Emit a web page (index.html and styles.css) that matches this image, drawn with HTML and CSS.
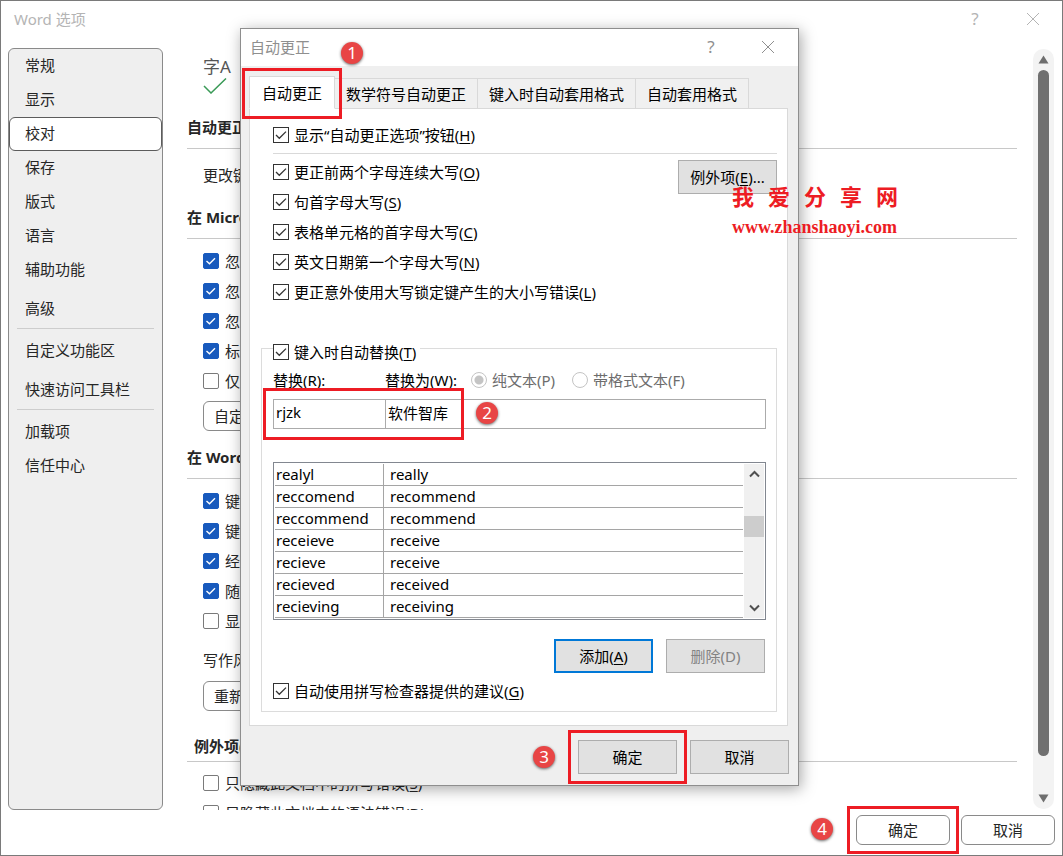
FILE: index.html
```
<!DOCTYPE html>
<html lang="zh-CN">
<head>
    <meta charset="UTF-8">
    <meta name="viewport" content="width=device-width,initial-scale=1.0">
    <title>Word 选项</title>
    <link rel="stylesheet" href="styles.css">
</head>
<body>
    <div class="window">
        <header class="titlebar">
            <h1>Word 选项</h1>
            <button class="tool" aria-label="帮助">?</button>
            <button class="tool" aria-label="关闭"><svg width="14" height="14" viewBox="0 0 14 14"><path d="M1 1L13 13M13 1L1 13"/></svg></button>
        </header>

        <div class="body">
            <nav class="sidebar">
                <a href="#">常规</a>
                <a href="#">显示</a>
                <a href="#" class="current">校对</a>
                <a href="#">保存</a>
                <a href="#">版式</a>
                <a href="#">语言</a>
                <a href="#">辅助功能</a>
                <a href="#" class="last">高级</a>
                <hr>
                <a href="#">自定义功能区</a>
                <a href="#" class="last">快速访问工具栏</a>
                <hr>
                <a href="#">加载项</a>
                <a href="#">信任中心</a>
            </nav>

            <main class="content">
                <div class="intro">
                    <span>字A</span>
                    <svg width="24" height="16" viewBox="0 0 24 16"><path d="M1 8L8 15L23 0.5"/></svg>
                </div>
                <section>
                    <h2>自动更正选项</h2>
                    <p>更改键入时 Word 更正文字的方式:</p>
                </section>
                <section>
                    <h2>在 Microsoft Office 程序中更正拼写时</h2>
                    <label><input type="checkbox" checked>忽略全部大写的单词(U)</label>
                    <label><input type="checkbox" checked>忽略包含数字的单词(B)</label>
                    <label><input type="checkbox" checked>忽略 Internet 和文件地址(F)</label>
                    <label><input type="checkbox" checked>标记重复单词(R)</label>
                    <label><input type="checkbox">仅根据主词典提供建议(I)</label>
                    <button class="round">自定义词典(C)...</button>
                </section>
                <section class="word">
                    <h2>在 Word 中更正拼写和语法时</h2>
                    <label><input type="checkbox" checked>键入时检查拼写(P)</label>
                    <label><input type="checkbox" checked>键入时标记语法错误(M)</label>
                    <label><input type="checkbox" checked>经常混淆的单词(N)</label>
                    <label><input type="checkbox" checked>随拼写检查语法(H)</label>
                    <label><input type="checkbox">显示可读性统计信息(L)</label>
                    <p>写作风格(W):</p>
                    <button class="round">重新检查文档(K)</button>
                </section>
                <section class="except">
                    <h2>例外项(X):</h2>
                    <label><input type="checkbox">只隐藏此文档中的拼写错误(<u>S</u>)</label>
                    <label><input type="checkbox">只隐藏此文档中的语法错误(<u>D</u>)</label>
                </section>
            </main>

            <div class="scroll">
                <svg width="11" height="9" viewBox="0 0 11 9"><path d="M5.5 0.5L10.5 8.5H0.5Z"/></svg>
                <div class="thumb"></div>
                <svg width="11" height="9" viewBox="0 0 11 9"><path d="M5.5 8.5L10.5 0.5H0.5Z"/></svg>
            </div>
        </div>

        <footer class="footer">
            <div class="marked">
                <button class="round">确定</button>
                <span class="frame"></span>
                <span class="badge">4</span>
            </div>
            <button class="round">取消</button>
        </footer>
    </div>

    <div class="dialog" role="dialog" aria-label="自动更正">
        <header class="dialog-title">
            <h1>自动更正</h1>
            <button class="tool" aria-label="帮助">?</button>
            <button class="tool" aria-label="关闭"><svg width="14" height="14" viewBox="0 0 14 14"><path d="M1 1L13 13M13 1L1 13"/></svg></button>
        </header>

        <div class="dialog-body">
            <div class="tabs">
                <div class="marked tab-mark">
                    <button class="tab active">自动更正</button>
                    <span class="frame"></span>
                    <span class="badge">1</span>
                </div>
                <button class="tab">数学符号自动更正</button>
                <button class="tab">键入时自动套用格式</button>
                <button class="tab">自动套用格式</button>
            </div>

            <div class="panel">
                <label class="first"><input type="checkbox" checked>显示“自动更正选项”按钮(<u>H</u>)</label>
                <div class="caps">
                    <div>
                        <label><input type="checkbox" checked>更正前两个字母连续大写(<u>O</u>)</label>
                        <label><input type="checkbox" checked>句首字母大写(<u>S</u>)</label>
                        <label><input type="checkbox" checked>表格单元格的首字母大写(<u>C</u>)</label>
                        <label><input type="checkbox" checked>英文日期第一个字母大写(<u>N</u>)</label>
                        <label><input type="checkbox" checked>更正意外使用大写锁定键产生的大小写错误(<u>L</u>)</label>
                    </div>
                    <button class="btn">例外项(<u>E</u>)...</button>
                </div>

                <fieldset>
                    <legend><label><input type="checkbox" checked>键入时自动替换(<u>T</u>)</label></legend>
                    <div class="names">
                        <label for="from">替换(<u>R</u>):</label>
                        <label for="to">替换为(<u>W</u>):</label>
                        <label class="off"><input type="radio" name="kind" checked disabled>纯文本(P)</label>
                        <label class="off"><input type="radio" name="kind" disabled>带格式文本(F)</label>
                    </div>
                    <div class="marked inputs">
                        <input type="text" id="from" value="rjzk">
                        <input type="text" id="to" value="软件智库">
                        <span class="frame"></span>
                        <span class="badge">2</span>
                    </div>

                    <div class="list">
                        <table>
                            <tr><td>realyl</td><td>really</td></tr>
                            <tr><td>reccomend</td><td>recommend</td></tr>
                            <tr><td>reccommend</td><td>recommend</td></tr>
                            <tr><td>receieve</td><td>receive</td></tr>
                            <tr><td>recieve</td><td>receive</td></tr>
                            <tr><td>recieved</td><td>received</td></tr>
                            <tr><td>recieving</td><td>receiving</td></tr>
                        </table>
                        <div class="list-scroll">
                            <svg width="11" height="8" viewBox="0 0 11 8"><path d="M1 6.5L5.5 2L10 6.5"/></svg>
                            <div class="list-thumb"></div>
                            <svg width="11" height="8" viewBox="0 0 11 8"><path d="M1 1.5L5.5 6L10 1.5"/></svg>
                        </div>
                    </div>

                    <div class="actions">
                        <button class="btn default">添加(<u>A</u>)</button>
                        <button class="btn" disabled>删除(D)</button>
                    </div>
                    <label class="suggest"><input type="checkbox" checked>自动使用拼写检查器提供的建议(<u>G</u>)</label>
                </fieldset>
            </div>

            <div class="dialog-buttons">
                <div class="marked">
                    <button class="btn">确定</button>
                    <span class="frame"></span>
                    <span class="badge">3</span>
                </div>
                <button class="btn">取消</button>
            </div>
        </div>

        <div class="watermark">
            <div class="site"><span>我</span><span>爱</span><span>分</span><span>享</span><span>网</span></div>
            <div class="url">www.zhanshaoyi.com</div>
        </div>
    </div>
</body>
</html>
```
FILE: styles.css
```
*{box-sizing: border-box;}
body{margin: 0;font: 15px/22px "Noto Sans","Noto Sans CJK SC",sans-serif;color: #262626;background: #fff;}
button,input{font: inherit;color: inherit;}
button{white-space: nowrap;}
h1,h2,p{margin: 0;}
svg{display: block;}
u{text-underline-offset: 2px;}

/* options window */
.window{display: flex;flex-direction: column;height: 100vh;border: 1px solid #7a7a7a;overflow: hidden;}
.titlebar{display: flex;align-items: center;height: 37px;flex: none;padding: 0 7px 0 13px;color: #b4b4b4;}
.titlebar h1,.dialog-title h1{flex: 1;padding-bottom: 2px;font-size: 15px;font-weight: normal;}
.tool{display: flex;align-items: center;justify-content: center;width: 44px;height: 32px;padding: 0 0 2px;border: 0;background: none;font-size: 17px;}
.tool + .tool{margin-left: 14px;}
.tool svg{fill: none;stroke: currentColor;}
.body{display: flex;flex: 1;min-height: 0;margin-top: 10px;padding: 0 8px 0 7px;}
.sidebar{width: 155px;flex: none;border: 1px solid #8a8a8a;border-radius: 6px;background: #efefef;}
.sidebar a{display: block;height: 34px;padding: 0 15px;border: 1px solid transparent;line-height: 30px;color: #262626;text-decoration: none;}
.sidebar .current{border-color: #5c5c5c;border-radius: 6px;background: #fff;}
.sidebar .last{margin-top: 5px;}
.sidebar hr{margin: 2px 8px 5px;border: 0;border-top: 1px solid #cdcdcd;}
.content{flex: 1;min-width: 0;padding: 0 16px 0 24px;overflow: hidden;}
.intro{height: 68px;padding: 8px 0 0 16px;font-size: 17px;color: #555;}
.intro svg{fill: none;stroke: #3a9a57;stroke-width: 1.5;}
.content h2{padding-bottom: 10px;border-bottom: 1px solid #c8c8c8;margin-bottom: 7px;font-size: 15px;}
.content p{padding: 0 16px;line-height: 38px;}
.content section{margin-bottom: 12px;}
.content label{display: flex;align-items: center;height: 30px;padding-left: 16px;}
.content .round{display: block;margin: 5px 0 15px 16px;padding: 0 10px;}
.content .word p{margin-top: 5px;}
.content .word .round{margin: 2px 0 24px 16px;}
.content .except h2{padding: 0 0 4px 7px;margin-bottom: 6px;}
.content input{appearance: none;width: 16px;height: 16px;margin: 0 6px 0 0;border: 1px solid #7a7a7a;border-radius: 2px;background: #fff;}
.content input:checked{border-color: #185abd;background: #185abd url("data:image/svg+xml,%3Csvg xmlns='http://www.w3.org/2000/svg' viewBox='0 0 14 14'%3E%3Cpath d='M2.5 7L5.5 9.8L11 4.2' fill='none' stroke='white' stroke-width='1.4'/%3E%3C/svg%3E");}
.round{height: 30px;padding-bottom: 2px;border: 1px solid #8a8a8a;border-radius: 6px;background: #fff;}
.scroll{display: flex;flex-direction: column;align-items: center;width: 21px;margin: 1px 0;padding: 6px 0;border-radius: 10px;background: #f3f3f3;fill: #6e6e6e;}
.thumb{flex: 1;width: 11px;margin: 6px 0 38px;border-radius: 6px;background: #707070;}
.footer{display: flex;justify-content: flex-end;gap: 11px;padding: 5px 7px 10px;}
.footer .round{width: 94px;}

/* autocorrect dialog */
.dialog{position: absolute;top: 28px;left: 240px;width: 559px;border: 1px solid #8e8e8e;background: #efefef;color: #000;box-shadow: 2px 3px 14px rgba(0,0,0,0.35);}
.dialog-title{display: flex;align-items: center;height: 37px;padding: 0 8px 0 9px;background: #fff;color: #8f8f8f;}
.dialog-title .tool + .tool{margin-left: 13px;}
.dialog-body{padding: 10px 10px 11px 8px;}
.tabs{display: flex;align-items: flex-end;}
.tab{height: 31px;margin-left: -1px;padding: 0 11px;border: 1px solid #d9d9d9;background: #f0f0f0;}
.tab.active{height: 33px;margin: 0;padding: 0 12px;border-bottom-color: #fff;background: #fff;}
.tab-mark{z-index: 1;}
.panel{margin-top: -1px;padding: 8px 10px 13px 11px;border: 1px solid #d9d9d9;background: #fff;}
.panel label{display: flex;align-items: center;height: 30px;}
.panel .first{height: 37px;margin-left: 12px;border-bottom: 1px solid #d9d9d9;}
.caps{display: flex;justify-content: space-between;align-items: flex-start;padding: 3px 0 0 12px;}
.caps .btn{margin-top: 3px;margin-left: -60px;}
.panel input[type=checkbox]{appearance: none;width: 16px;height: 16px;margin: 0 5px 0 0;border: 1px solid #333;background: #fff url("data:image/svg+xml,%3Csvg xmlns='http://www.w3.org/2000/svg' viewBox='0 0 14 14'%3E%3Cpath d='M2 7L5.3 10.3L12 3.6' fill='none' stroke='%23333' stroke-width='1.3'/%3E%3C/svg%3E");}
fieldset{min-width: 0;margin: 26px 0 0;padding: 0 10px 9px 11px;border: 1px solid #dcdcdc;}
legend{padding: 8px 4px 0 0;}
.panel legend label,.panel .names label,.panel .suggest{height: 22px;}
.names{display: flex;padding-top: 6px;}
.names label:nth-child(1){width: 112px;}
.names label:nth-child(2){width: 86px;}
.names .off{margin-right: 17px;color: #6d6d6d;}
.names input{appearance: none;width: 16px;height: 16px;margin: 0 5px 0 0;border: 1px solid #c4c4c4;border-radius: 50%;background: #fff;}
.names input:checked{background: radial-gradient(circle,#c4c4c4 4px,#fff 5px);}
.inputs{display: flex;margin-top: 8px;}
.inputs input{height: 30px;min-width: 0;padding: 0 2px 4px;border: 1px solid #ababab;background: #fff;outline: none;}
#from{width: 113px;}
#to{flex: 1;margin-left: -1px;}
.list{display: flex;gap: 1px;margin-top: 33px;padding: 1px;border: 1px solid #828790;}
.list table{flex: 1;border-collapse: separate;border-spacing: 0;line-height: 21px;}
.list td{height: 22px;padding: 0 6px;border-bottom: 1px solid #a5a5a5;}
.list td:first-child{width: 109px;padding: 0 1px;border-right: 1px solid #a5a5a5;}
.list-scroll{display: flex;flex-direction: column;align-items: center;width: 20px;padding: 6px 0;background: #f0f0f0;}
.list-scroll svg{fill: none;stroke: #505050;stroke-width: 2;}
.list-thumb{width: 20px;height: 21px;margin: 38px 0 auto;background: #cdcdcd;}
.actions{display: flex;justify-content: flex-end;gap: 13px;margin-top: 19px;padding-right: 1px;}
.suggest{margin-top: 7px;}
.btn{width: 99px;height: 34px;padding: 0;border: 1px solid #adadad;background: #e1e1e1;}
.btn.default{border: 2px solid #0078d7;}
.btn:disabled{color: #838383;}
.dialog-buttons{display: flex;justify-content: flex-end;gap: 13px;margin: 14px -1px 0 0;}

/* red frames with numbers */
.marked{position: relative;}
.frame{position: absolute;inset: -10px;border: 3px solid #ed1c24;pointer-events: none;}
.badge{position: absolute;width: 22px;height: 22px;border-radius: 50%;background: #e84545;box-shadow: 0 1px 3px rgba(0,0,0,0.6);color: #fff;font-size: 17px;text-align: center;}
.tab-mark .frame{inset: -8px -7px -10px;}
.tab-mark .badge{left: 92px;top: -34px;}
.inputs .frame{inset: -11px auto -11px -10px;width: 201px;}
.inputs .badge{left: 203px;top: 3px;}
.dialog-buttons .badge{left: -45px;top: 6px;}
.footer .frame{inset: -9px;}
.footer .badge{left: -45px;top: 3px;}

.watermark{position: absolute;left: 491px;top: 154px;width: 166px;color: #ed1c24;font-weight: bold;pointer-events: none;}
.site{display: flex;justify-content: space-between;font: bold 22px/24px "Noto Sans CJK SC",sans-serif;}
.url{margin-top: 8px;font: bold 18px/24px "Liberation Serif",serif;}
```
